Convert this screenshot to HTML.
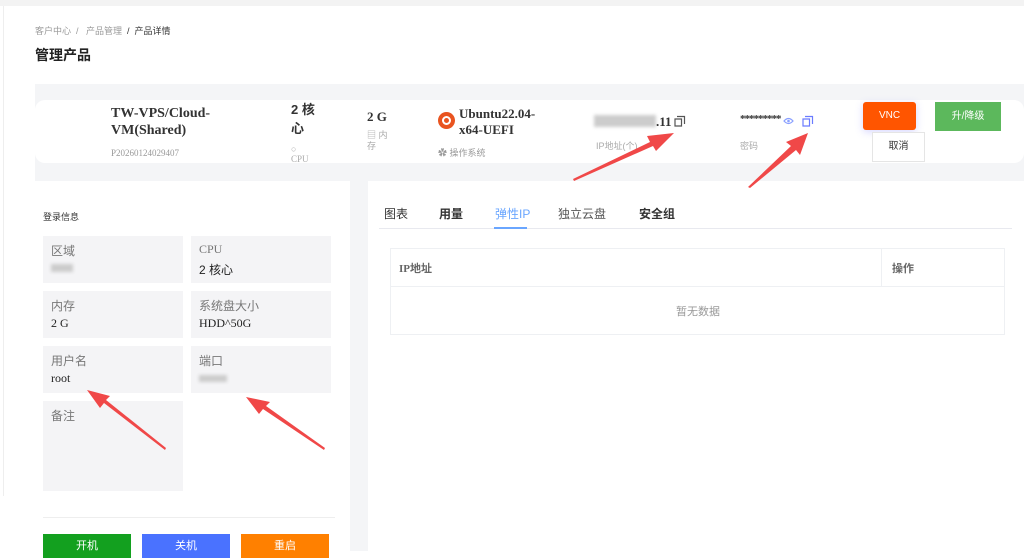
<!DOCTYPE html>
<html><head><meta charset="utf-8"><style>
*{margin:0;padding:0;box-sizing:border-box}
body{width:1024px;height:551px;overflow:hidden;background:#fff;font-family:"Liberation Serif","Noto Sans CJK SC",serif;position:relative;color:#333}
.a{position:absolute}
.cn{font-family:"Liberation Sans","Noto Sans CJK SC",sans-serif}
.bg{left:35px;top:84px;width:989px;height:467px;background:#f4f5f7}
.card{left:35px;top:100px;width:989px;height:63px;background:#fff;border-radius:10px}
.box{background:#f4f4f6;width:140px;height:47px}
.box .l{position:absolute;left:8px;top:6px;font-size:12px;color:#777}
.box .v{position:absolute;left:8px;top:25px;font-size:12px;color:#222}
.blur{background:#ccc;filter:blur(1.5px)}
.btn{color:#fff;font-size:11px;text-align:center;line-height:24px;height:24px;width:88px;padding-top:6px}
</style></head><body>
<div class="a" style="left:0;top:0;width:1024px;height:6px;background:#f3f3f3"></div>
<div class="a" style="left:3px;top:6px;width:1px;height:490px;background:#eee"></div>
<div class="a cn" style="left:35px;top:24px;font-size:9px;color:#999">客户中心 &nbsp;/ &nbsp; 产品管理 &nbsp;<span style="color:#333">/ &nbsp;产品详情</span></div>
<div class="a cn" style="left:35px;top:45px;font-size:14px;font-weight:bold;color:#222">管理产品</div>
<div class="a bg"></div>
<div class="a card"></div>
<div class="a" style="left:111px;top:105px;font-size:14px;font-weight:bold;line-height:17px;color:#333">TW-VPS/Cloud-<br>VM(Shared)</div>
<div class="a" style="left:111px;top:148px;font-size:9px;color:#999">P20260124029407</div>
<div class="a cn" style="left:291px;top:100px;font-size:13px;font-weight:bold;line-height:19px">2 核<br>心</div>
<div class="a" style="left:291px;top:144px;font-size:9px;color:#aaa;line-height:10px">○<br>CPU</div>
<div class="a" style="left:367px;top:109px;font-size:13px;font-weight:bold">2 G</div>
<div class="a cn" style="left:367px;top:130px;font-size:9px;color:#aaa;line-height:11px">▤ 内<br>存</div>
<div class="a" style="left:438px;top:112px;width:17px;height:17px;border-radius:50%;background:#e95420"><div class="a" style="left:4px;top:4px;width:9px;height:9px;border-radius:50%;border:2px solid #fff"></div></div>
<div class="a" style="left:459px;top:106px;font-size:13px;font-weight:bold;line-height:16px">Ubuntu22.04-<br>x64-UEFI</div>
<div class="a cn" style="left:438px;top:146px;font-size:9px;color:#999">✿ 操作系统</div>
<div class="a blur" style="left:594px;top:115px;width:62px;height:12px"></div>
<div class="a" style="left:656px;top:114px;font-size:13px;font-weight:bold">.11</div>
<svg class="a" style="left:674px;top:115px" width="12" height="12"><path d="M3 1.5h7.5v7.5M1 4h6.5v7H1z" fill="none" stroke="#555" stroke-width="1.2"/></svg>
<div class="a cn" style="left:596px;top:139px;font-size:9px;color:#aaa">IP地址(个)</div>
<div class="a" style="left:740px;top:113px;font-size:11px;font-weight:bold;letter-spacing:-1px">*********</div>
<svg class="a" style="left:783px;top:117px" width="11" height="8"><path d="M1 4Q5.5-1 10 4Q5.5 9 1 4z" fill="none" stroke="#8aa0ff" stroke-width="1.2"/><circle cx="5.5" cy="4" r="1.3" fill="#8aa0ff"/></svg>
<svg class="a" style="left:802px;top:115px" width="12" height="12"><path d="M3 1.5h7.5v7.5M1 4h6.5v7H1z" fill="none" stroke="#6b7cff" stroke-width="1.2"/></svg>
<div class="a cn" style="left:740px;top:139px;font-size:9px;color:#aaa">密码</div>
<div class="a cn" style="left:863px;top:102px;width:53px;height:28px;background:#ff5500;border-radius:3px;color:#fff;font-size:10px;text-align:center;line-height:28px;box-shadow:0 2px 8px rgba(100,100,255,.25)">VNC</div>
<div class="a cn" style="left:935px;top:102px;width:66px;height:29px;background:#5cb85c;color:#fff;font-size:10px;text-align:center;line-height:29px">升/降级</div>
<div class="a cn" style="left:872px;top:132px;width:53px;height:30px;background:#fff;border:1px solid #e5e5e5;font-size:10px;text-align:center;line-height:28px">取消</div>
<div class="a" style="left:35px;top:181px;width:315px;height:370px;background:#fff"></div>
<div class="a" style="left:0;top:496px;width:35px;height:55px;background:#fff"></div>
<div class="a cn" style="left:43px;top:210px;font-size:9px;color:#333">登录信息</div>
<div class="a box cn" style="left:43px;top:236px"><span class="l">区域</span><span class="blur a" style="left:8px;top:28px;width:22px;height:8px"></span></div>
<div class="a box cn" style="left:191px;top:236px"><span class="l" style="font-family:'Liberation Serif'">CPU</span><span class="v">2 核心</span></div>
<div class="a box cn" style="left:43px;top:291px"><span class="l">内存</span><span class="v" style="font-family:'Liberation Serif'">2 G</span></div>
<div class="a box cn" style="left:191px;top:291px"><span class="l">系统盘大小</span><span class="v" style="font-family:'Liberation Serif'">HDD^50G</span></div>
<div class="a box cn" style="left:43px;top:346px"><span class="l">用户名</span><span class="v" style="font-family:'Liberation Serif'">root</span></div>
<div class="a box cn" style="left:191px;top:346px"><span class="l">端口</span><span class="blur a" style="left:8px;top:29px;width:28px;height:7px"></span></div>
<div class="a box cn" style="left:43px;top:401px;height:90px"><span class="l">备注</span></div>
<div class="a" style="left:43px;top:517px;width:292px;height:1px;background:#eee"></div>
<div class="a btn cn" style="left:43px;top:534px;background:#13a01f;line-height:12px">开机</div>
<div class="a btn cn" style="left:142px;top:534px;background:#4a72ff;line-height:12px">关机</div>
<div class="a btn cn" style="left:241px;top:534px;background:#ff8000;line-height:12px">重启</div>
<div class="a" style="left:368px;top:181px;width:656px;height:370px;background:#fff"></div>
<div class="a cn" style="left:384px;top:205px;font-size:12px;color:#333">图表</div>
<div class="a cn" style="left:439px;top:205px;font-size:12px;font-weight:bold;color:#333">用量</div>
<div class="a cn" style="left:495px;top:205px;font-size:12px;color:#6aa6ff">弹性IP</div>
<div class="a cn" style="left:558px;top:205px;font-size:12px;color:#555">独立云盘</div>
<div class="a cn" style="left:639px;top:205px;font-size:12px;font-weight:bold;color:#333">安全组</div>
<div class="a" style="left:379px;top:228px;width:633px;height:1px;background:#e8e9ef"></div>
<div class="a" style="left:494px;top:227px;width:33px;height:2px;background:#6aa6ff"></div>
<div class="a" style="left:390px;top:248px;width:615px;height:87px;border:1px solid #eef0f3"></div>
<div class="a" style="left:390px;top:286px;width:615px;height:1px;background:#eef0f3"></div>
<div class="a" style="left:881px;top:248px;width:1px;height:39px;background:#eef0f3"></div>
<div class="a" style="left:399px;top:260px;font-size:11px;font-weight:bold;color:#666">IP<span class="cn">地址</span></div>
<div class="a cn" style="left:892px;top:260px;font-size:11px;font-weight:bold;color:#666">操作</div>
<div class="a cn" style="left:676px;top:303px;font-size:11px;color:#999">暂无数据</div>
<svg class="a" style="left:0;top:0" width="1024" height="551">
<g fill="#f04848">
<polygon points="573,179 650,142 647,136 674,133 656,151 653,146 574,181"/>
<polygon points="748,187 791,146 786,142 808,133 800,155 796,150 750,188"/>
<polygon points="165,450 104,403 100,408 87,390 110,396 106,400 166,448"/>
<polygon points="324,450 263,409 259,414 246,397 270,402 266,406 325,448"/>
</g></svg>
</body></html>
